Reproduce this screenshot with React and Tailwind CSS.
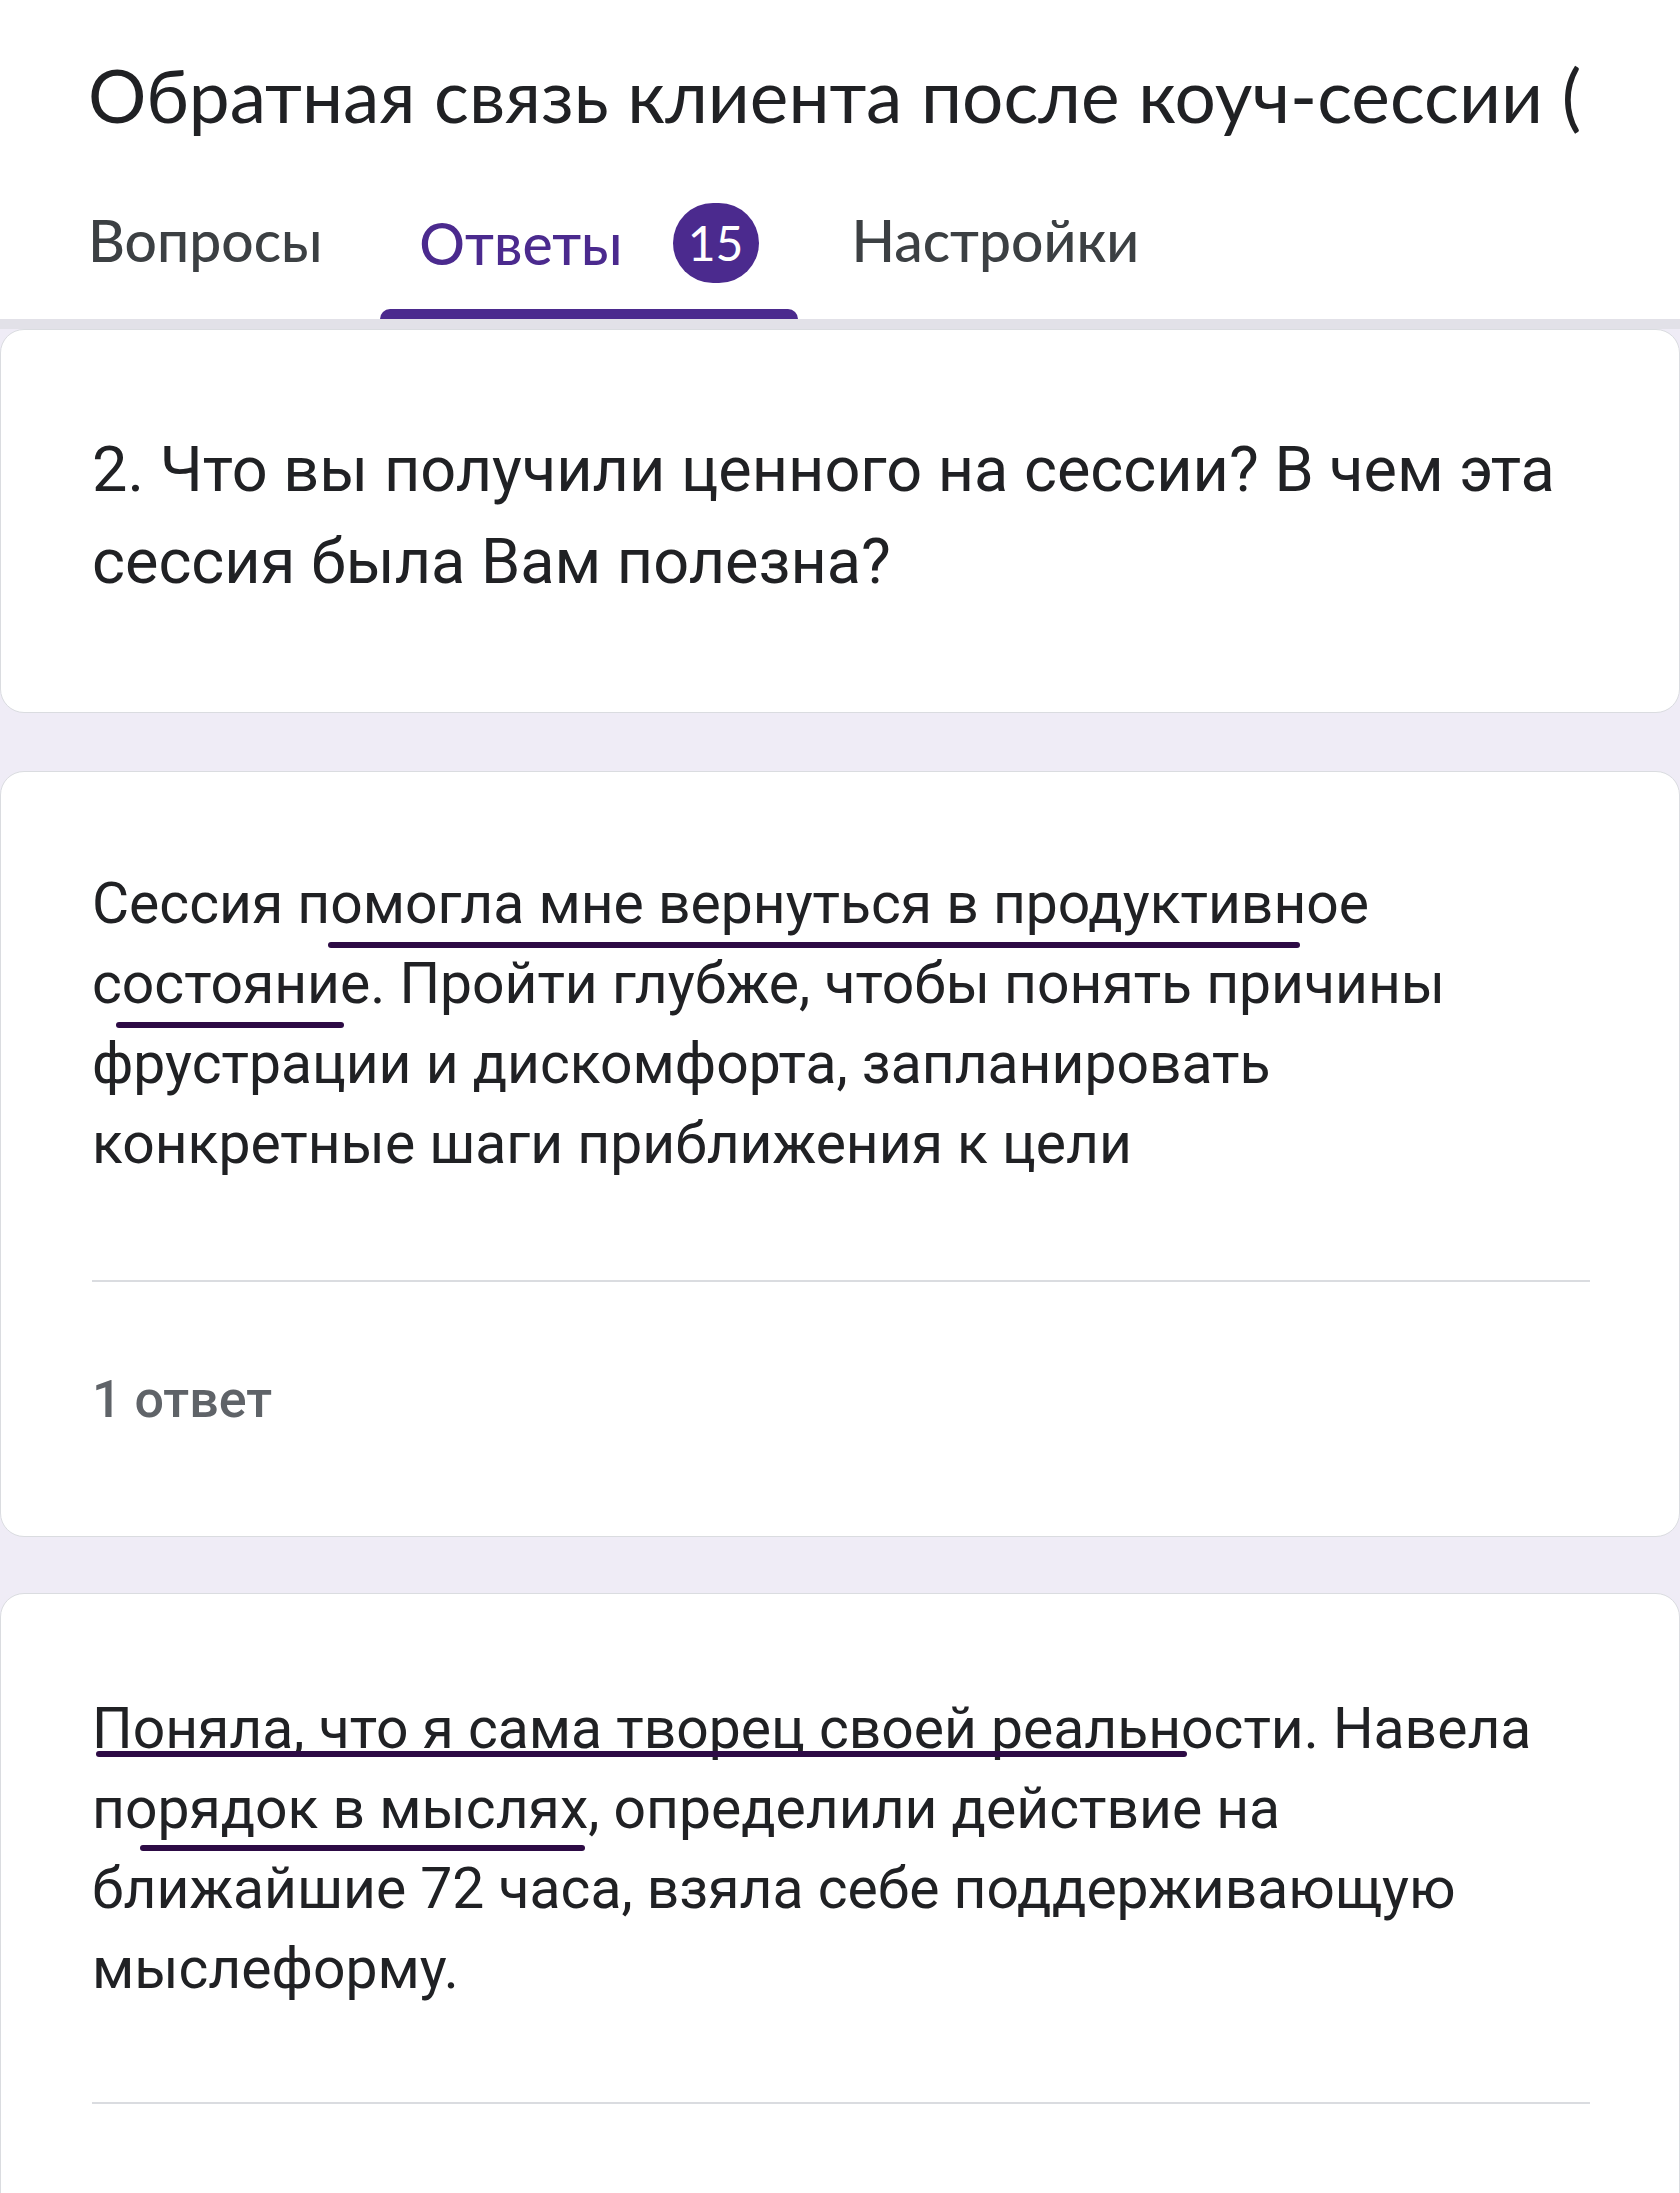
const sans = { fontFamily: "Lato, 'Open Sans', sans-serif" };

function Mark({ className }) {
  return (
    <span
      className={`absolute h-[6px] rounded-full bg-[#2d0b45] ${className}`}
    />
  );
}

function Tabs() {
  return (
    <div
      className="flex items-end pl-[88px] h-[189px] text-[57px] leading-none font-medium text-[#3c4043] border-b-[10px] border-[#e2e1e8]"
      style={sans}
    >
      <div className="pb-[50px]">Вопросы</div>
      <div className="ml-[58px] flex flex-col">
        <div className="flex items-center px-[39px] pb-[26px] text-[#4b2a8e]">
          <span>Ответы</span>
          <span className="ml-[50px] w-[86px] h-[80px] rounded-full bg-[#4b2a8e] text-white text-[48px] font-normal flex items-center justify-center">
            15
          </span>
        </div>
        <div className="h-[10px] rounded-t-[10px] bg-[#4b2a8e]" />
      </div>
      <div className="ml-[54px] pb-[50px]">Настройки</div>
    </div>
  );
}

export default function App() {
  return (
    <div
      className="w-[1680px] min-h-[2193px] bg-[#efecf6] overflow-hidden"
      style={{ fontFamily: "Roboto, 'Noto Sans', sans-serif" }}
    >
      <header className="bg-white pt-[50px]">
        <div className="pl-[88px] pr-[99px]">
          <h1
            className="text-[73px] leading-[90px] text-[#202124] whitespace-nowrap overflow-hidden"
            style={sans}
          >
            Обратная связь клиента после коуч-сессии (Обратная связь)
          </h1>
        </div>
        <Tabs />
      </header>

      <section className="bg-white border border-[#dadce0] rounded-[24px] pt-[94px] pb-[104px] px-[91px]">
        <p className="text-[63px] leading-[92px] text-[#202124]">
          2. Что вы получили ценного на сессии? В чем эта
          <br />
          сессия была Вам полезна?
        </p>
      </section>

      <section className="mt-[58px] bg-white border border-[#dadce0] rounded-[24px] pt-[92px] pb-[106px] px-[91px]">
        <div className="text-[57px] leading-[80px] text-[#202124]">
          <div className="relative">
            Сессия помогла мне вернуться в продуктивное
            <Mark className="left-[236px] top-[78px] w-[972px]" />
          </div>
          <div className="relative">
            состояние. Пройти глубже, чтобы понять причины
            <Mark className="left-[24px] top-[78px] w-[228px]" />
          </div>
          <div>фрустрации и дискомфорта, запланировать</div>
          <div>конкретные шаги приближения к цели</div>
        </div>
        <div className="mt-[96px] h-[2px] bg-[#dadce0] mr-[-2px]" />
        <div className="mt-[88px] text-[52px] leading-[60px] font-medium text-[#5f6368]">
          1 ответ
        </div>
      </section>

      <section className="mt-[56px] bg-white border border-[#dadce0] rounded-t-[24px] pt-[95px] pb-[160px] px-[91px]">
        <div className="text-[57px] leading-[80px] text-[#202124]">
          <div className="relative">
            Поняла, что я сама творец своей реальности. Навела
            <Mark className="left-[4px] top-[62px] w-[1091px]" />
          </div>
          <div className="relative">
            порядок в мыслях, определили действие на
            <Mark className="left-[48px] top-[76px] w-[445px]" />
          </div>
          <div>ближайшие 72 часа, взяла себе поддерживающую</div>
          <div>мыслеформу.</div>
        </div>
        <div className="mt-[93px] h-[2px] bg-[#dadce0] mr-[-2px]" />
      </section>
    </div>
  );
}
